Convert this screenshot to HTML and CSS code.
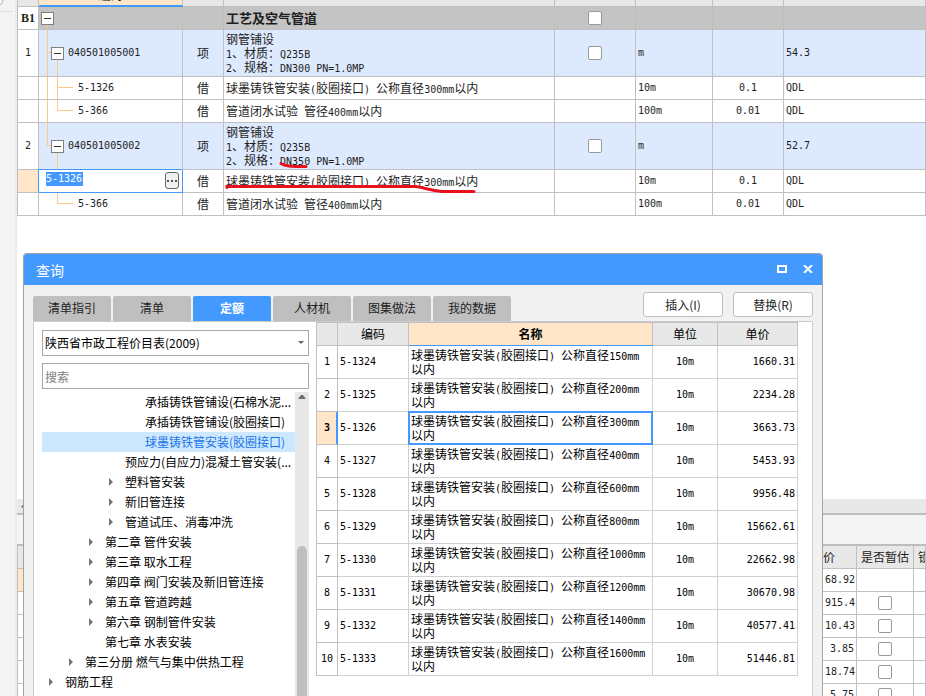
FILE: index.html
```html
<!DOCTYPE html>
<html lang="zh-CN">
<head>
<meta charset="utf-8">
<title>查询</title>
<link rel="stylesheet" href="styles.css">
</head>
<body>
<div class="app">
  <aside class="gutter">
    <svg width="15" height="14" viewBox="0 0 15 14" fill="none"><path d="M0 4.5C2 4 3 2.5 3 0" stroke="#b5b5b5"/><path d="M0 11.500H13" stroke="#dedede"/></svg>
  </aside>
  <main class="main">
    <section class="upper">
      <table class="grid bill">
        <colgroup><col class="w-head"><col class="w-code"><col class="w-kind"><col class="w-name"><col class="w-check"><col class="w-unit"><col class="w-rate"><col></colgroup>
        <thead><tr><th></th><th class="current">编码</th><th></th><th></th><th></th><th></th><th></th><th></th></tr></thead>
        <tbody>
          <tr class="section">
            <th>B1</th>
            <td><div class="node"><svg class="lines" width="143" height="22"><path d="M8.500 11V22"/></svg><button class="fold lv0" aria-label="折叠"></button></div></td>
            <td></td><td class="title">工艺及空气管道</td>
            <td class="mid"><input type="checkbox" aria-label="B1"></td><td></td><td></td><td></td>
          </tr>
          <tr class="item">
            <th>1</th>
            <td><div class="node"><svg class="lines" width="143" height="46"><path d="M8.500 0V46M8.500 22.500H14M18.500 22V46"/></svg><button class="fold lv1" aria-label="折叠"></button><span class="ln">040501005001</span></div></td>
            <td class="mid">项</td>
            <td>钢管铺设<br><span class="ln">1</span>、材质：<span class="ln">Q235B</span><br><span class="ln">2</span>、规格：<span class="ln">DN300 PN=1.0MP</span></td>
            <td class="mid"><input type="checkbox" aria-label="1"></td>
            <td class="ln">m</td><td></td><td class="ln">54.3</td>
          </tr>
          <tr>
            <th></th>
            <td><div class="node leaf"><svg class="lines" width="143" height="22"><path d="M8.500 0V22M18.500 0V22M18.500 10.500H34"/></svg><span class="ln">5-1326</span></div></td>
            <td class="mid">借</td>
            <td>球墨铸铁管安装<span class="ln">(</span>胶圈接口<span class="ln">) </span>公称直径<span class="ln">300mm</span>以内</td>
            <td></td><td class="ln">10m</td><td class="ln mid">0.1</td><td class="ln">QDL</td>
          </tr>
          <tr>
            <th></th>
            <td><div class="node leaf"><svg class="lines" width="143" height="22"><path d="M8.500 0V22M18.500 0V10.500H34"/></svg><span class="ln">5-366</span></div></td>
            <td class="mid">借</td>
            <td>管道闭水试验<span class="ln"> </span>管径<span class="ln">400mm</span>以内</td>
            <td></td><td class="ln">100m</td><td class="ln mid">0.01</td><td class="ln">QDL</td>
          </tr>
          <tr class="item">
            <th>2</th>
            <td><div class="node"><svg class="lines" width="143" height="46"><path d="M8.500 0V22.500H14M18.500 22V46"/></svg><button class="fold lv1" aria-label="折叠"></button><span class="ln">040501005002</span></div></td>
            <td class="mid">项</td>
            <td class="marked">钢管铺设<br><span class="ln">1</span>、材质：<span class="ln">Q235B</span><br><span class="ln">2</span>、规格：<span class="ln">DN350 PN=1.0MP</span>
              <svg class="pen" width="331" height="46"><path d="M57 40.500C61 43 66 43.500 82 43.500"/></svg></td>
            <td class="mid"><input type="checkbox" aria-label="2"></td>
            <td class="ln">m</td><td></td><td class="ln">52.7</td>
          </tr>
          <tr>
            <th class="current"></th>
            <td class="editing"><div class="editor"><input class="ln" type="text" value="5-1326" aria-label="编码"><button class="more" aria-label="更多"><svg width="10" height="2" fill="#555"><path d="M0 0h2v2h-2zM4 0h2v2h-2zM8 0h2v2h-2z"/></svg></button></div></td>
            <td class="mid">借</td>
            <td class="marked">球墨铸铁管安装<span class="ln">(</span>胶圈接口<span class="ln">) </span>公称直径<span class="ln">300mm</span>以内
              <svg class="pen" width="331" height="22"><path d="M3 17.500L3 16.500H192C202 18 206 20.500 218 21.500H250"/></svg></td>
            <td></td><td class="ln">10m</td><td class="ln mid">0.1</td><td class="ln">QDL</td>
          </tr>
          <tr>
            <th></th>
            <td><div class="node leaf"><svg class="lines" width="143" height="22"><path d="M18.500 0V10.500H34"/></svg><span class="ln">5-366</span></div></td>
            <td class="mid">借</td>
            <td>管道闭水试验<span class="ln"> </span>管径<span class="ln">400mm</span>以内</td>
            <td></td><td class="ln">100m</td><td class="ln mid">0.01</td><td class="ln">QDL</td>
          </tr>
        </tbody>
      </table>
    </section>
    <section class="lower">
      <div class="splitter"><svg width="4" height="5"><path d="M4 0V5L0 2.500z" fill="#555"/></svg></div>
      <div class="toolbar"></div>
      <table class="grid detail">
        <colgroup><col class="w-head"><col><col class="w-price"><col class="w-est"><col class="w-lock"></colgroup>
        <thead><tr><th></th><th></th><th class="start">价</th><th>是否暂估</th><th class="start lock">锁</th></tr></thead>
        <tbody>
          <tr><th class="current"></th><td></td><td class="ln num">68.92</td><td></td><td></td></tr>
          <tr><th></th><td></td><td class="ln num">915.4</td><td class="mid"><input type="checkbox" aria-label="是否暂估"></td><td></td></tr>
          <tr><th></th><td></td><td class="ln num">10.43</td><td class="mid"><input type="checkbox" aria-label="是否暂估"></td><td></td></tr>
          <tr><th></th><td></td><td class="ln num">3.85</td><td class="mid"><input type="checkbox" aria-label="是否暂估"></td><td></td></tr>
          <tr><th></th><td></td><td class="ln num">18.74</td><td class="mid"><input type="checkbox" aria-label="是否暂估"></td><td></td></tr>
          <tr><th></th><td></td><td class="ln num">5.75</td><td class="mid"><input type="checkbox" aria-label="是否暂估"></td><td></td></tr>
        </tbody>
      </table>
    </section>
  </main>
</div>

<div class="dialog" role="dialog" aria-labelledby="dlg-title">
  <header class="titlebar">
    <h1 id="dlg-title">查询</h1>
    <button aria-label="最大化"><svg width="10" height="8" fill="none" stroke="#fff" stroke-width="2"><path d="M1 1H9V7H1z"/></svg></button>
    <button aria-label="关闭"><svg width="10" height="8" fill="none" stroke="#fff" stroke-width="2"><path d="M1 0L9 8M9 0L1 8"/></svg></button>
  </header>
  <div class="bar">
    <nav class="tabs">
      <button>清单指引</button><button>清单</button><button class="active">定额</button><button>人材机</button><button>图集做法</button><button>我的数据</button>
    </nav>
    <div class="actions"><button>插入(I)</button><button>替换(R)</button></div>
  </div>
  <div class="panel">
    <div class="side">
      <div class="combo">
        <select aria-label="定额库"><option>陕西省市政工程价目表(2009)</option></select>
        <svg width="6" height="3"><path d="M0 0H6L3 3z" fill="#666"/></svg>
      </div>
      <input class="search" type="text" placeholder="搜索" aria-label="搜索">
      <div class="browse">
        <ul class="tree">
          <li class="d5">承插铸铁管铺设(石棉水泥...</li>
          <li class="d5">承插铸铁管铺设(胶圈接口)</li>
          <li class="d5 selected">球墨铸铁管安装(胶圈接口)</li>
          <li class="d4">预应力(自应力)混凝土管安装(...</li>
          <li class="d4 parent">塑料管安装</li>
          <li class="d4 parent">新旧管连接</li>
          <li class="d4 parent">管道试压、消毒冲洗</li>
          <li class="d3 parent">第二章 管件安装</li>
          <li class="d3 parent">第三章 取水工程</li>
          <li class="d3 parent">第四章 阀门安装及新旧管连接</li>
          <li class="d3 parent">第五章 管道跨越</li>
          <li class="d3 parent">第六章 钢制管件安装</li>
          <li class="d3">第七章 水表安装</li>
          <li class="d2 parent">第三分册 燃气与集中供热工程</li>
          <li class="d1 parent">钢筋工程</li>
        </ul>
        <div class="scroll"><svg width="8" height="4"><path d="M0 4H8L5 0H3z" fill="#707070"/></svg><i class="thumb"></i></div>
      </div>
    </div>
    <div class="result">
      <table class="grid quota">
        <colgroup><col class="w-head"><col class="w-qcode"><col><col class="w-qunit"><col class="w-qprice"></colgroup>
        <thead><tr><th></th><th>编码</th><th class="current">名称</th><th>单位</th><th>单价</th></tr></thead>
        <tbody>
          <tr><th>1</th><td class="ln">5-1324</td><td>球墨铸铁管安装<span class="ln">(</span>胶圈接口<span class="ln">) </span>公称直径<span class="ln">150mm</span><br>以内</td><td class="ln mid">10m</td><td class="ln num">1660.31</td></tr>
          <tr><th>2</th><td class="ln">5-1325</td><td>球墨铸铁管安装<span class="ln">(</span>胶圈接口<span class="ln">) </span>公称直径<span class="ln">200mm</span><br>以内</td><td class="ln mid">10m</td><td class="ln num">2234.28</td></tr>
          <tr class="picked"><th class="current">3</th><td class="ln">5-1326</td><td class="focus">球墨铸铁管安装<span class="ln">(</span>胶圈接口<span class="ln">) </span>公称直径<span class="ln">300mm</span><br>以内</td><td class="ln mid">10m</td><td class="ln num">3663.73</td></tr>
          <tr><th>4</th><td class="ln">5-1327</td><td>球墨铸铁管安装<span class="ln">(</span>胶圈接口<span class="ln">) </span>公称直径<span class="ln">400mm</span><br>以内</td><td class="ln mid">10m</td><td class="ln num">5453.93</td></tr>
          <tr><th>5</th><td class="ln">5-1328</td><td>球墨铸铁管安装<span class="ln">(</span>胶圈接口<span class="ln">) </span>公称直径<span class="ln">600mm</span><br>以内</td><td class="ln mid">10m</td><td class="ln num">9956.48</td></tr>
          <tr><th>6</th><td class="ln">5-1329</td><td>球墨铸铁管安装<span class="ln">(</span>胶圈接口<span class="ln">) </span>公称直径<span class="ln">800mm</span><br>以内</td><td class="ln mid">10m</td><td class="ln num">15662.61</td></tr>
          <tr><th>7</th><td class="ln">5-1330</td><td>球墨铸铁管安装<span class="ln">(</span>胶圈接口<span class="ln">) </span>公称直径<span class="ln">1000mm</span><br>以内</td><td class="ln mid">10m</td><td class="ln num">22662.98</td></tr>
          <tr><th>8</th><td class="ln">5-1331</td><td>球墨铸铁管安装<span class="ln">(</span>胶圈接口<span class="ln">) </span>公称直径<span class="ln">1200mm</span><br>以内</td><td class="ln mid">10m</td><td class="ln num">30670.98</td></tr>
          <tr><th>9</th><td class="ln">5-1332</td><td>球墨铸铁管安装<span class="ln">(</span>胶圈接口<span class="ln">) </span>公称直径<span class="ln">1400mm</span><br>以内</td><td class="ln mid">10m</td><td class="ln num">40577.41</td></tr>
          <tr><th>10</th><td class="ln">5-1333</td><td>球墨铸铁管安装<span class="ln">(</span>胶圈接口<span class="ln">) </span>公称直径<span class="ln">1600mm</span><br>以内</td><td class="ln mid">10m</td><td class="ln num">51446.81</td></tr>
        </tbody>
      </table>
    </div>
  </div>
</div>
</body>
</html>
```
FILE: styles.css
```css
* { box-sizing: border-box; }

:root {
  --blue: #4499ff;
  --line: #c0c0c0;
  --head: #e8e8e8;
  --peach: #ffe6c8;
}

body {
  margin: 0;
  height: 100vh;
  overflow: hidden;
  position: relative;
  background: #fff;
  color: #1e1e1e;
  font: 12px/14px "Noto Sans CJK SC", sans-serif;
}

button, input, select { font: inherit; color: inherit; margin: 0; padding: 0; }
svg { display: block; flex: none; }

.app { display: flex; height: 100%; }
.gutter { flex: 0 0 17px; background: #f4f4f4; border-right: 2px solid #ebebeb; }
.main { flex: 1; min-width: 0; display: grid; grid-template-rows: 499px 1fr; overflow: hidden; }

/* shared grid look */
.grid { width: 100%; table-layout: fixed; border-collapse: separate; border-spacing: 0; border-left: 1px solid var(--line); }
.grid th, .grid td { height: 23px; padding: 0 2px; border: 0 solid var(--line); border-width: 0 1px 1px 0; text-align: left; vertical-align: middle; }
.grid th { padding: 0; text-align: center; font-weight: 400; }
.grid thead th { background: var(--head); }
.grid tbody th { font-family: "DejaVu Sans Mono", monospace; font-size: 10px; }
.grid .current, .grid thead .current { background: var(--peach); font-weight: 700; }
.grid .mid { text-align: center; }
.grid .num { text-align: right; }
.grid .start { text-align: left; }
.ln { font-family: "DejaVu Sans Mono", monospace; font-size: 10px; white-space: pre; }
span.ln { line-height: 10px; }

.w-head { width: 21px; }
.w-code { width: 144px; }
.w-kind { width: 41px; }
.w-name { width: 331px; }
.w-check { width: 81px; }
.w-unit { width: 77px; }
.w-rate { width: 71px; }
.w-price { width: 34px; }
.w-est { width: 57px; }
.w-lock { width: 12px; }
.w-qcode { width: 71px; }
.w-qunit { width: 65px; }
.w-qprice { width: 80px; }

input[type="checkbox"] {
  appearance: none;
  display: block;
  width: 14px;
  height: 14px;
  margin: 0 auto;
  border: 1px solid #999;
  border-radius: 2px;
  background: #fff;
}

/* bill table, scrolled so that only the foot of its header shows */
.upper { overflow: hidden; }
.bill { margin-top: -16px; }
.bill thead .current { border-bottom: 2px solid var(--blue); }
.bill .section td { background: #c4c4c4; }
.bill .section th { font-family: "Liberation Serif", serif; font-size: 12px; font-weight: 700; }
.bill .section .title { font-size: 13px; font-weight: 700; }
.bill .item td { height: 47px; background: #dde9fd; }
.bill tbody td:nth-child(2) { padding: 0; }

.node { position: relative; display: flex; align-items: center; height: 22px; }
.item .node { height: 46px; }
.leaf { padding-left: 39px; }
.lines { position: absolute; left: 0; top: 0; fill: none; stroke: #ffca80; }
.fold {
  position: relative;
  width: 13px;
  height: 13px;
  border: 1px solid #808080;
  background: linear-gradient(#333, #333) center / 7px 1px no-repeat #fff;
}
.lv0 { margin-left: 2px; }
.lv1 { margin: 0 4px 0 12px; }

.marked { position: relative; }
.pen { position: absolute; left: 0; top: 0; overflow: visible; fill: none; stroke: #e8101c; stroke-width: 3px; stroke-linecap: round; }

.bill .editing { border-color: var(--blue); box-shadow: -1px -1px 0 var(--blue); }
.editor { display: flex; align-items: flex-start; justify-content: space-between; height: 22px; padding: 2px 3px 0 7px; }
.editor input { width: 37px; height: 14px; border: 0; background: var(--blue); color: #fff; }
.more { display: flex; align-items: center; justify-content: center; width: 14px; height: 17px; border: 1px solid #666; border-radius: 3px; background: #f0f0f0; }

/* lower pane */
.splitter { height: 16px; padding: 5px 0 0 4px; background: var(--head); border-bottom: 2px solid #bdbdbd; }
.toolbar { height: 31px; background: #f4f4f4; border-bottom: 2px solid #bdbdbd; }
.detail th { overflow: hidden; white-space: nowrap; }
.detail .lock { padding-left: 4px; }

/* query dialog */
.dialog {
  position: absolute;
  left: 23px;
  right: 103px;
  top: 253px;
  bottom: 0;
  display: flex;
  flex-direction: column;
  border: 1px solid #a4a4a4;
  border-bottom: 0;
  border-radius: 4px 4px 0 0;
  background: #f1f1f1;
  overflow: hidden;
}
.titlebar { display: flex; align-items: center; gap: 16px; height: 31px; padding: 0 9px 2px 12px; background: var(--blue); color: #fff; }
.titlebar h1 { flex: 1; margin: 0; padding-top: 3px; font-size: 14px; line-height: 20px; font-weight: 400; }
.titlebar button { border: 0; background: none; }

.bar { display: flex; justify-content: space-between; align-items: flex-end; height: 36px; padding: 0 9px; }
.tabs { display: flex; gap: 2px; }
.tabs button { width: 78px; height: 25px; padding-bottom: 2px; border: 0; border-radius: 2px 2px 0 0; background: #bfbfbf; }
.tabs .active { background: var(--blue); color: #fff; font-weight: 700; }
.actions { display: flex; gap: 10px; align-self: flex-start; padding-top: 7px; }
.actions button { width: 80px; height: 25px; border: 1px solid #bdbdbd; border-radius: 3px; background: #fff; }

.panel { flex: 1; min-height: 0; display: flex; margin: 0 9px; border: 1px solid #ccc; border-bottom: 0; background: #fff; overflow: hidden; }
.side { flex: 0 0 282px; display: flex; flex-direction: column; padding: 8px 7px 0 8px; color: #000; }
.combo { position: relative; }
.combo select { appearance: none; display: block; width: 100%; height: 26px; padding: 0 2px; border: 1px solid #a8a8a8; border-radius: 0; background: #fff; }
.combo svg { position: absolute; right: 5px; top: 11px; pointer-events: none; }
.search { height: 26px; margin: 7px 0 3px; padding: 0 2px; border: 1px solid #a8a8a8; flex: none; }
.search::placeholder { color: #808080; }

.browse { flex: 1; min-height: 0; display: flex; }
.tree { flex: 1; min-width: 0; margin: 0; padding: 0; list-style: none; }
.tree li { position: relative; height: 20px; line-height: 20px; white-space: nowrap; }
.tree .selected { background: #cce8ff; color: #1a73e8; }
.d1 { padding-left: 23px; }
.d2 { padding-left: 43px; }
.d3 { padding-left: 63px; }
.d4 { padding-left: 83px; }
.d5 { padding-left: 103px; }
.parent::before {
  content: "";
  position: absolute;
  top: 6px;
  margin-left: -16px;
  border: 4px solid transparent;
  border-left-color: #757575;
  border-right-width: 0;
}
.scroll { flex: 0 0 14px; display: flex; flex-direction: column; align-items: center; padding-top: 3px; background: var(--head); }
.thumb { flex: 1; width: 10px; margin-top: 147px; border-radius: 5px 5px 0 0; background: #bfbfbf; }

.result { flex: 1; min-width: 0; padding-right: 14px; color: #000; }
.quota { border-top: 1px solid var(--line); }
.quota thead .current { border-bottom-color: var(--blue); }
.quota tbody th, .quota tbody td { height: 33px; }
.quota tbody td { border-color: #d0d0d0; }
.quota .picked th { box-shadow: -1px 0 0 var(--blue) inset; border-right-color: var(--blue); }
.quota .focus { position: relative; }
.quota .focus::after { content: ""; position: absolute; inset: -1px; border: 2px solid var(--blue); }
```
